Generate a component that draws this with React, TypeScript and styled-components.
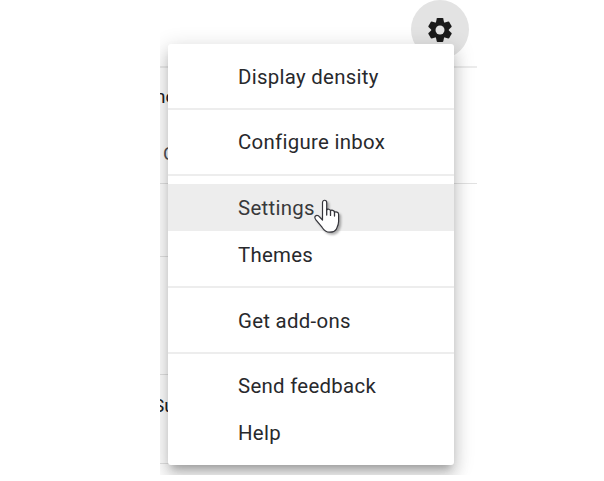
import React from "react";
import styled, { createGlobalStyle } from "styled-components";

const GlobalStyle = createGlobalStyle`
  body { margin: 0; background: #fff; }
`;

const Page = styled.main`
  width: 604px;
  height: 481px;
  overflow: hidden;
  background: #fff;
  font-family: Roboto, "Open Sans", sans-serif;
`;

const Inbox = styled.section`
  position: relative;
  width: 317px;
  height: 475px;
  margin-left: 160px;
  overflow: hidden;
`;

const Header = styled.header`
  box-sizing: border-box;
  display: flex;
  justify-content: flex-end;
  height: 68px;
  padding-right: 8px;
  border-bottom: 2px solid #ececec;
`;

const GearButton = styled.button`
  display: grid;
  place-items: center;
  width: 58px;
  height: 59px;
  padding: 0;
  border: 0;
  border-radius: 50%;
  background: #e3e3e3;
`;

const MailRow = styled.div<{
  $height: number;
  $top?: number;
  $line?: "full" | "short" | "none";
}>`
  box-sizing: border-box;
  width: ${(p) => (p.$line === "short" ? "100px" : "100%")};
  height: ${(p) => p.$height}px;
  padding-top: ${(p) => p.$top ?? 0}px;
  border-bottom: ${(p) => (p.$line === "none" ? "0" : "1px solid #e2e2e2")};
  font-size: 19px;
  line-height: 24px;
  white-space: nowrap;
`;

const Snippet = styled.div<{ $shift: number; $gap?: number; $color?: string }>`
  margin-left: ${(p) => p.$shift}px;
  margin-bottom: ${(p) => p.$gap ?? 0}px;
  color: ${(p) => p.$color ?? "#202124"};
`;

const Menu = styled.nav`
  position: absolute;
  top: 44px;
  left: 8px;
  box-sizing: border-box;
  width: 286px;
  height: 421px;
  padding: 9px 0;
  border-radius: 3px;
  background: #fff;
  box-shadow: 0 11px 15px 1px rgba(0, 0, 0, 0.14),
    0 4px 20px 3px rgba(0, 0, 0, 0.12), 0 7px 7px -4px rgba(0, 0, 0, 0.2);
`;

const MenuItem = styled.div<{ $active?: boolean }>`
  box-sizing: border-box;
  display: flex;
  align-items: center;
  height: 46.85px;
  padding: 0.8px 0 0 70px;
  background: ${(p) => (p.$active ? "#ededed" : "transparent")};
  color: ${(p) => (p.$active ? "#38393b" : "#28292c")};
  font-size: 20.4px;
  letter-spacing: 0.29px;
  white-space: nowrap;
`;

const Separator = styled.hr`
  height: 2px;
  margin: 8.2px 0 8.6px;
  border: 0;
  background: #ededed;
`;

const Pointer = styled.svg`
  position: absolute;
  left: 152px;
  top: 195px;
  width: 34px;
  height: 42px;
  filter: drop-shadow(2px 2px 1px rgba(0, 0, 0, 0.3));
`;

const groups = [
  ["Display density"],
  ["Configure inbox"],
  ["Settings", "Themes"],
  ["Get add-ons"],
  ["Send feedback", "Help"],
];

export default function App() {
  return (
    <Page>
      <GlobalStyle />
      <Inbox>
        <Header>
          <GearButton aria-label="Settings">
            <svg width="26" height="26" viewBox="-13 -13 26 26" fill="#1a1a1a">
              {[0, 60, 120].map((angle) => (
                <path
                  key={angle}
                  transform={`rotate(${angle})`}
                  d="M-2.6-12H2.6L3.2-11.4L4.2-7V7L3.2 11.4L2.6 12H-2.6L-3.2 11.4L-4.2 7V-7L-3.2-11.4Z"
                />
              ))}
              <circle r="8.4" />
              <circle r="4.5" fill="#e3e3e3" />
            </svg>
          </GearButton>
        </Header>
        <MailRow $height={116} $top={17}>
          <Snippet $shift={-5} $gap={33}>nc</Snippet>
          <Snippet $shift={3} $color="#505256">C</Snippet>
        </MailRow>
        <MailRow $height={73} $line="short" />
        <MailRow $height={118} $line="short" />
        <MailRow $height={89} $top={19} $line="short">
          <Snippet $shift={-7}>Su</Snippet>
        </MailRow>
        <MailRow $height={11} $line="none" />
        <Menu>
          {groups.map((items, index) => (
            <React.Fragment key={items[0]}>
              {index > 0 && <Separator />}
              {items.map((label) => (
                <MenuItem key={label} $active={label === "Settings"}>
                  {label}
                </MenuItem>
              ))}
            </React.Fragment>
          ))}
        </Menu>
        <Pointer viewBox="0 0 34 42" aria-hidden="true">
          <path
            d="M10.5 7.5C10.5 4.5 14.7 4.5 14.7 7.5V15C15.4 13.7 18.2 14 18.5 15.8C19.4 14.7 22.2 15.3 22.5 17.2C23.7 16.4 26.6 17.1 26.6 19.2V26.5C26.6 30 25.4 31.6 24.2 34.4C23.1 36.3 20.7 37.2 17.8 37.2C14.5 37.2 12.1 35.6 10 32.2L3.5 24.3C1.7 21.3 4.2 19.6 6.5 20.8L10.5 25Z"
            fill="#fff"
            stroke="#35353b"
            strokeWidth="1.2"
            strokeLinejoin="round"
          />
          <path
            d="M14.7 14V20M18.5 15.5V20.4M22.5 17V21"
            fill="none"
            stroke="#35353b"
            strokeWidth="1.3"
            strokeLinecap="round"
          />
        </Pointer>
      </Inbox>
    </Page>
  );
}
